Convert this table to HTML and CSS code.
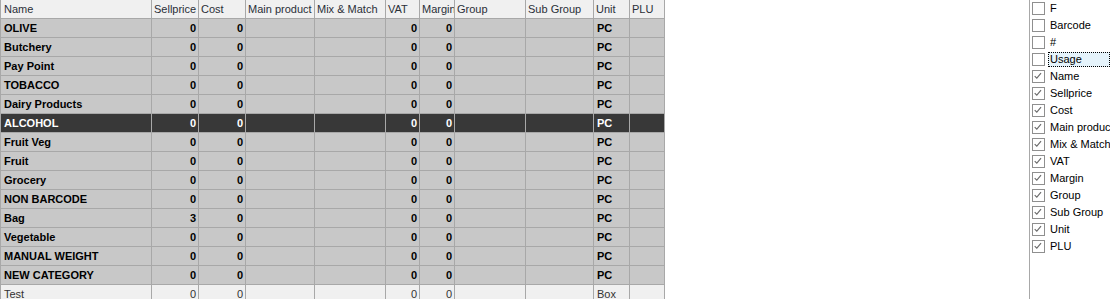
FILE: index.html
```html
<!DOCTYPE html>
<html>
<head>
<meta charset="utf-8">
<link rel="stylesheet" href="styles.css">
</head>
<body>
<div class="page">
  <div class="grid">
    <div class="row head">
      <div class="c">Name</div><div class="c">Sellprice</div><div class="c">Cost</div><div class="c">Main product</div><div class="c">Mix &amp; Match</div><div class="c">VAT</div><div class="c">Margin</div><div class="c">Group</div><div class="c">Sub Group</div><div class="c">Unit</div><div class="c">PLU</div>
    </div>
    <div class="row"><div class="c">OLIVE</div><div class="c n">0</div><div class="c n">0</div><div class="c"></div><div class="c"></div><div class="c n">0</div><div class="c n">0</div><div class="c"></div><div class="c"></div><div class="c">PC</div><div class="c"></div></div>
    <div class="row"><div class="c">Butchery</div><div class="c n">0</div><div class="c n">0</div><div class="c"></div><div class="c"></div><div class="c n">0</div><div class="c n">0</div><div class="c"></div><div class="c"></div><div class="c">PC</div><div class="c"></div></div>
    <div class="row"><div class="c">Pay Point</div><div class="c n">0</div><div class="c n">0</div><div class="c"></div><div class="c"></div><div class="c n">0</div><div class="c n">0</div><div class="c"></div><div class="c"></div><div class="c">PC</div><div class="c"></div></div>
    <div class="row"><div class="c">TOBACCO</div><div class="c n">0</div><div class="c n">0</div><div class="c"></div><div class="c"></div><div class="c n">0</div><div class="c n">0</div><div class="c"></div><div class="c"></div><div class="c">PC</div><div class="c"></div></div>
    <div class="row"><div class="c">Dairy Products</div><div class="c n">0</div><div class="c n">0</div><div class="c"></div><div class="c"></div><div class="c n">0</div><div class="c n">0</div><div class="c"></div><div class="c"></div><div class="c">PC</div><div class="c"></div></div>
    <div class="row sel"><div class="c">ALCOHOL</div><div class="c n">0</div><div class="c n">0</div><div class="c"></div><div class="c"></div><div class="c n">0</div><div class="c n">0</div><div class="c"></div><div class="c"></div><div class="c">PC</div><div class="c"></div></div>
    <div class="row"><div class="c">Fruit Veg</div><div class="c n">0</div><div class="c n">0</div><div class="c"></div><div class="c"></div><div class="c n">0</div><div class="c n">0</div><div class="c"></div><div class="c"></div><div class="c">PC</div><div class="c"></div></div>
    <div class="row"><div class="c">Fruit</div><div class="c n">0</div><div class="c n">0</div><div class="c"></div><div class="c"></div><div class="c n">0</div><div class="c n">0</div><div class="c"></div><div class="c"></div><div class="c">PC</div><div class="c"></div></div>
    <div class="row"><div class="c">Grocery</div><div class="c n">0</div><div class="c n">0</div><div class="c"></div><div class="c"></div><div class="c n">0</div><div class="c n">0</div><div class="c"></div><div class="c"></div><div class="c">PC</div><div class="c"></div></div>
    <div class="row"><div class="c">NON BARCODE</div><div class="c n">0</div><div class="c n">0</div><div class="c"></div><div class="c"></div><div class="c n">0</div><div class="c n">0</div><div class="c"></div><div class="c"></div><div class="c">PC</div><div class="c"></div></div>
    <div class="row"><div class="c">Bag</div><div class="c n">3</div><div class="c n">0</div><div class="c"></div><div class="c"></div><div class="c n">0</div><div class="c n">0</div><div class="c"></div><div class="c"></div><div class="c">PC</div><div class="c"></div></div>
    <div class="row"><div class="c">Vegetable</div><div class="c n">0</div><div class="c n">0</div><div class="c"></div><div class="c"></div><div class="c n">0</div><div class="c n">0</div><div class="c"></div><div class="c"></div><div class="c">PC</div><div class="c"></div></div>
    <div class="row"><div class="c">MANUAL WEIGHT</div><div class="c n">0</div><div class="c n">0</div><div class="c"></div><div class="c"></div><div class="c n">0</div><div class="c n">0</div><div class="c"></div><div class="c"></div><div class="c">PC</div><div class="c"></div></div>
    <div class="row"><div class="c">NEW CATEGORY</div><div class="c n">0</div><div class="c n">0</div><div class="c"></div><div class="c"></div><div class="c n">0</div><div class="c n">0</div><div class="c"></div><div class="c"></div><div class="c">PC</div><div class="c"></div></div>
    <div class="row item"><div class="c">Test</div><div class="c n">0</div><div class="c n">0</div><div class="c"></div><div class="c"></div><div class="c n">0</div><div class="c n">0</div><div class="c"></div><div class="c"></div><div class="c">Box</div><div class="c"></div></div>
  </div>

  <div class="panel">
    <div class="opt"><span class="box"></span><span class="lbl">F</span></div>
    <div class="opt"><span class="box"></span><span class="lbl">Barcode</span></div>
    <div class="opt"><span class="box"></span><span class="lbl">#</span></div>
    <div class="opt focus"><span class="box"></span><span class="lbl">Usage</span></div>
    <div class="opt"><span class="box"><svg viewBox="0 0 13 13" width="11" height="11"><polyline points="2,6 4.5,8.5 9.5,2.5" /></svg></span><span class="lbl">Name</span></div>
    <div class="opt"><span class="box"><svg viewBox="0 0 13 13" width="11" height="11"><polyline points="2,6 4.5,8.5 9.5,2.5" /></svg></span><span class="lbl">Sellprice</span></div>
    <div class="opt"><span class="box"><svg viewBox="0 0 13 13" width="11" height="11"><polyline points="2,6 4.5,8.5 9.5,2.5" /></svg></span><span class="lbl">Cost</span></div>
    <div class="opt"><span class="box"><svg viewBox="0 0 13 13" width="11" height="11"><polyline points="2,6 4.5,8.5 9.5,2.5" /></svg></span><span class="lbl">Main product</span></div>
    <div class="opt"><span class="box"><svg viewBox="0 0 13 13" width="11" height="11"><polyline points="2,6 4.5,8.5 9.5,2.5" /></svg></span><span class="lbl">Mix &amp; Match</span></div>
    <div class="opt"><span class="box"><svg viewBox="0 0 13 13" width="11" height="11"><polyline points="2,6 4.5,8.5 9.5,2.5" /></svg></span><span class="lbl">VAT</span></div>
    <div class="opt"><span class="box"><svg viewBox="0 0 13 13" width="11" height="11"><polyline points="2,6 4.5,8.5 9.5,2.5" /></svg></span><span class="lbl">Margin</span></div>
    <div class="opt"><span class="box"><svg viewBox="0 0 13 13" width="11" height="11"><polyline points="2,6 4.5,8.5 9.5,2.5" /></svg></span><span class="lbl">Group</span></div>
    <div class="opt"><span class="box"><svg viewBox="0 0 13 13" width="11" height="11"><polyline points="2,6 4.5,8.5 9.5,2.5" /></svg></span><span class="lbl">Sub Group</span></div>
    <div class="opt"><span class="box"><svg viewBox="0 0 13 13" width="11" height="11"><polyline points="2,6 4.5,8.5 9.5,2.5" /></svg></span><span class="lbl">Unit</span></div>
    <div class="opt"><span class="box"><svg viewBox="0 0 13 13" width="11" height="11"><polyline points="2,6 4.5,8.5 9.5,2.5" /></svg></span><span class="lbl">PLU</span></div>
  </div>
</div>
</body>
</html>
```

FILE: styles.css
```css
html, body {
  margin: 0;
  padding: 0;
  background: #ffffff;
  overflow: hidden;
}
body {
  font-family: "Liberation Sans", Arial, sans-serif;
  font-size: 11px;
  color: #000;
}
.page {
  display: flex;
  width: 1110px;
  height: 299px;
  overflow: hidden;
}
.grid {
  display: flex;
  flex-direction: column;
  border-left: 1px solid #a8a8a8;
  flex: none;
}
.row {
  display: grid;
  grid-template-columns: 151px 47px 47px 69px 71px 34px 35px 71px 68px 36px 35px;
  height: 19px;
  background: #c8c8c8;
  font-weight: bold;
}
.c {
  box-sizing: border-box;
  height: 19px;
  border-right: 1px solid #a8a8a8;
  border-bottom: 1px solid #a8a8a8;
  padding: 0 2px 0 3px;
  line-height: 18px;
  white-space: nowrap;
  overflow: hidden;
}
.n {
  text-align: right;
  padding-right: 2px;
}
.head {
  background: #f0f0f0;
  font-weight: normal;
  color: #2a2f38;
}
.head .c {
  padding-left: 2px;
}
.head .c:first-child {
  padding-left: 3px;
}
.sel {
  background: #383838;
  color: #ffffff;
}
.item {
  background: #f0f0f0;
  font-weight: normal;
  color: #333333;
}
.panel {
  margin-left: auto;
  width: 78px;
  flex: none;
  border-left: 1px solid #a8a8a8;
  padding-left: 2px;
  overflow: visible;
  white-space: nowrap;
}
.opt {
  display: flex;
  align-items: center;
  height: 17px;
  color: #000;
}
.box {
  box-sizing: border-box;
  width: 13px;
  height: 13px;
  border: 1px solid #8f8f8f;
  background: #fff;
  flex: none;
  display: flex;
  align-items: center;
  justify-content: center;
}
.box svg polyline {
  fill: none;
  stroke: #6a6a6a;
  stroke-width: 1.3;
}
.lbl {
  margin-left: 3px;
  padding-left: 2px;
  line-height: 15px;
  height: 15px;
  flex: 1;
}
.focus .lbl {
  background: #e5f3fb;
  outline: 1px dotted #000;
  outline-offset: -1px;
}
```
